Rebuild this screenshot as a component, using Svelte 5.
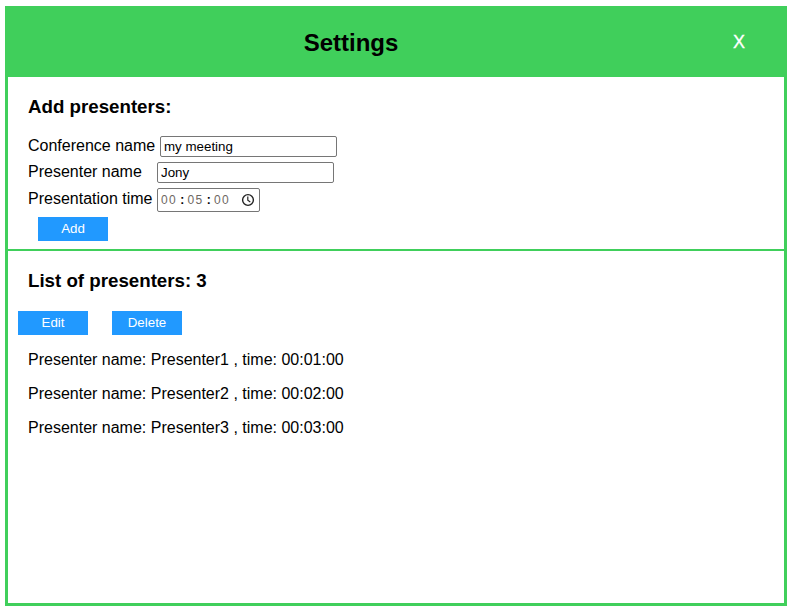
<script>
  let conference = $state('my meeting');
  let presenter = $state('Jony');
  const time = ['00', '05', '00'];
  const presenters = [
    { name: 'Presenter1', time: '00:01:00' },
    { name: 'Presenter2', time: '00:02:00' },
    { name: 'Presenter3', time: '00:03:00' }
  ];
</script>

<main class="settings">
  <header>
    <h2>Settings</h2>
    <button class="close" aria-label="Close">X</button>
  </header>

  <section class="add">
    <h3>Add presenters:</h3>
    <label class="row conference"><span>Conference name</span><input type="text" bind:value={conference} /></label>
    <label class="row presenter"><span>Presenter name</span><input type="text" bind:value={presenter} /></label>
    <div class="row duration">
      <span>Presentation time</span>
      <div class="time">
        {#each time as part, i}
          {#if i > 0}<b>:</b>{/if}<span class="part">{part}</span>
        {/each}
        <svg width="14" height="14" viewBox="0 0 14 14" fill="none" stroke="#222" stroke-width="1.4">
          <circle cx="7" cy="7" r="5.4" />
          <path d="M6.8 3.6V7.2L9.3 8.9" stroke-width="1.2" />
        </svg>
      </div>
    </div>
    <button class="action">Add</button>
  </section>

  <section class="list">
    <h3>List of presenters: {presenters.length}</h3>
    <div class="actions">
      <button class="action">Edit</button>
      <button class="action">Delete</button>
    </div>
    {#each presenters as p}
      <p>Presenter name: {p.name} , time: {p.time}</p>
    {/each}
  </section>
</main>

<style>
  :global(body) {
    background: #fff;
    overflow: hidden;
  }
  .settings {
    box-sizing: border-box;
    width: 782px;
    height: 600px;
    margin: 6px 0 0 5px;
    border: 3px solid #40cf5b;
    font: 16px/18px "Liberation Sans", Arial, sans-serif;
    color: #000;
  }
  header {
    display: flex;
    height: 68px;
    background: #40cf5b;
  }
  h2 {
    width: 686px;
    margin: 20px 0 0;
    font-size: 24px;
    line-height: 27px;
    text-align: center;
  }
  button {
    border: 0;
    padding: 0;
    font-family: inherit;
    color: #fff;
  }
  .close {
    width: 90px;
    height: 68px;
    padding-bottom: 2px;
    background: none;
    font-size: 18px;
    -webkit-text-stroke: 0.3px #fff;
  }
  h3 {
    margin: 0;
    font-size: 18.72px;
    line-height: 21px;
  }
  .add {
    box-sizing: border-box;
    height: 174px;
    padding: 19px 20px 0;
    border-bottom: 2px solid #40cf5b;
  }
  .row {
    display: flex;
    align-items: center;
  }
  .conference {
    margin-top: 19px;
    height: 21px;
    gap: 5px;
  }
  .conference > span { width: 127px; }
  .presenter {
    margin-top: 5px;
    height: 21px;
  }
  .presenter > span,
  .duration > span { width: 129px; }
  .row > span {
    flex: none;
    white-space: nowrap;
  }
  .duration {
    margin-top: 5px;
    height: 24px;
  }
  .duration > span { margin-top: -3px; }
  .presenter > span,
  .conference > span { margin-top: -2px; }
  input,
  .time {
    box-sizing: border-box;
    border: 1px solid #767676;
    border-radius: 2px;
    background: #fff;
    color: #000;
  }
  input {
    width: 177px;
    height: 21px;
    padding: 1px 3px;
    font: 13.333px "Liberation Sans", Arial, sans-serif;
    outline: none;
  }
  .time {
    display: flex;
    align-items: center;
    width: 103px;
    height: 24px;
    padding-left: 3px;
    font-size: 12px;
  }
  .part {
    width: 17px;
    letter-spacing: 1.3px;
    color: #6e6862;
  }
  .time b {
    width: 9.5px;
    padding-right: 1px;
    box-sizing: border-box;
    text-align: center;
  }
  .time svg { margin-left: 10px; }
  .action {
    display: block;
    width: 70px;
    height: 24px;
    background: #2199ff;
    font-size: 13.333px;
    line-height: 24px;
  }
  .add .action { margin: 5px 0 0 10px; }
  .list { padding: 19px 20px 0; }
  .actions {
    display: flex;
    gap: 24px;
    margin: 20px 0 16px -10px;
  }
  p {
    margin: 0 0 16px;
  }
</style>
